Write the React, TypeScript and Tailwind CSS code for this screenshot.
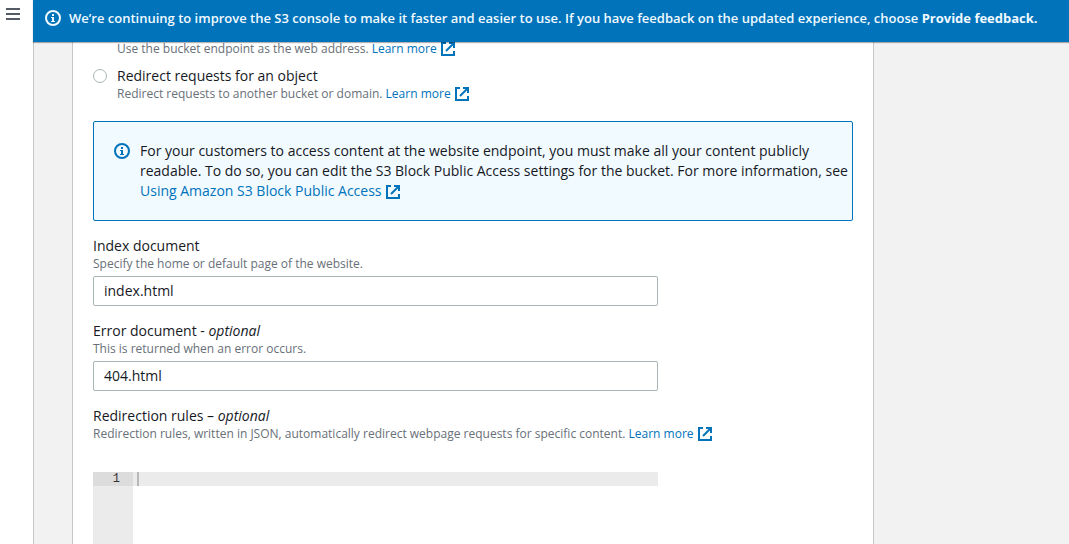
import type { ReactNode } from 'react';

function ExternalIcon() {
  return (
    <svg viewBox="0 0 16 16" className="inline-block size-4 align-[-4px]" fill="none" stroke="currentColor" strokeWidth="2" aria-hidden="true">
      <path d="M6 2H2v12h12v-4" />
      <path d="M9 2h5v5" />
      <path d="M13.5 2.5L6 10" />
    </svg>
  );
}

function InfoIcon() {
  return (
    <svg viewBox="0 0 16 16" className="size-4 shrink-0" fill="none" stroke="currentColor" strokeWidth="2" aria-hidden="true">
      <circle cx="8" cy="8" r="7" />
      <path d="M8 12V7M8 4v2" />
      <path d="M6 7.5h3M6 11.5h4" strokeWidth="1" />
    </svg>
  );
}

function ExternalLink({ children }: { children: ReactNode }) {
  return (
    <a href="#" className="whitespace-nowrap text-[#0073bb]">
      {children} <ExternalIcon />
    </a>
  );
}

function Help({ id, children }: { id?: string; children: ReactNode }) {
  return <p id={id} className="h-4 text-[12px] leading-4 text-[#687078]">{children}</p>;
}

function TextField({ id, label, help, value }: { id: string; label: ReactNode; help: string; value: string }) {
  return (
    <div className="mt-[15px]">
      <label htmlFor={id} className="block">{label}</label>
      <Help id={`${id}-help`}>{help}</Help>
      <input
        id={id}
        aria-describedby={`${id}-help`}
        defaultValue={value}
        className="mt-1 block h-[30px] w-full max-w-[565px] rounded-[2px] border border-[#aab7b8] bg-white px-2.5 pb-0.5"
      />
    </div>
  );
}

export default function App() {
  return (
    <div className="flex h-screen overflow-hidden bg-white font-['Open_Sans','Noto_Sans',sans-serif] text-[14px] leading-5 text-[#16191f]">
      <nav className="w-[34px] shrink-0 border-r border-[#c4c8c8] pl-1.5 pt-1.5">
        <button type="button" aria-label="Open navigation" className="block text-[#545b64]">
          <svg viewBox="0 0 14 16" className="h-4 w-3.5" stroke="currentColor" strokeWidth="2" aria-hidden="true">
            <path d="M0 3h14M0 8h14M0 13h14" />
          </svg>
        </button>
      </nav>
      <div className="-ml-px flex min-w-0 flex-1 flex-col">
        <header className="relative z-10 flex h-[42px] shrink-0 items-center gap-2 bg-[#0073bb] px-3 pb-1.5 text-[13px] font-semibold text-[#f1faff] shadow-[0_1px_1px_rgba(0,0,0,0.3)]">
          <InfoIcon />
          <p className="whitespace-nowrap">
            We’re continuing to improve the S3 console to make it faster and easier to use. If you have feedback on the updated experience, choose <b className="font-bold">Provide feedback.</b>
          </p>
        </header>
        <main className="-mt-px ml-px flex-1 overflow-hidden bg-[#f2f2f2] pl-[38px]">
          <section className="h-full max-w-[802px] border-x border-[#c4c8c8] bg-white px-5">
            <div className="pl-6">
              <Help>
                Use the bucket endpoint as the web address. <ExternalLink>Learn more</ExternalLink>
              </Help>
            </div>
            <div className="mt-[9px] flex gap-2.5">
              <input type="radio" id="redirect" name="hosting-type" className="mt-[3px] size-3.5 shrink-0 appearance-none rounded-full border border-[#aab7b8] bg-white" />
              <div>
                <label htmlFor="redirect" className="block">Redirect requests for an object</label>
                <Help>
                  Redirect requests to another bucket or domain. <ExternalLink>Learn more</ExternalLink>
                </Help>
              </div>
            </div>
            <div role="note" className="mt-[19px] flex gap-2.5 rounded-[2px] border border-[#0073bb] bg-[#f1faff] py-[19px] pl-5">
              <span className="pt-0.5 text-[#0073bb]"><InfoIcon /></span>
              <p>
                For your customers to access content at the website endpoint, you must make all your content publicly readable. To do so, you can edit the S3 Block Public Access settings for the bucket. For more information, see{' '}
                <ExternalLink>Using Amazon S3 Block Public Access</ExternalLink>
              </p>
            </div>
            <TextField id="index-doc" label="Index document" help="Specify the home or default page of the website." value="index.html" />
            <TextField id="error-doc" label={<>Error document - <i>optional</i></>} help="This is returned when an error occurs." value="404.html" />
            <div className="mt-[15px]">
              <label htmlFor="rules" className="block">Redirection rules – <i>optional</i></label>
              <Help>
                Redirection rules, written in JSON, automatically redirect webpage requests for specific content. <ExternalLink>Learn more</ExternalLink>
              </Help>
              <div className="mt-[30px] flex h-[200px] max-w-[565px] font-['Liberation_Mono',monospace] text-[12px] leading-[14px]">
                <div className="w-10 shrink-0 bg-[#ebebeb] text-[#333]">
                  <div className="bg-[#dcdcdc] pr-[13px] text-right">1</div>
                </div>
                <div className="flex h-[14px] flex-1 bg-[#ebebeb] pl-1">
                  <textarea id="rules" rows={1} className="block h-[14px] w-full resize-none overflow-hidden border-l-2 border-[#b8b8b8] outline-none" />
                </div>
              </div>
            </div>
          </section>
        </main>
      </div>
    </div>
  );
}
